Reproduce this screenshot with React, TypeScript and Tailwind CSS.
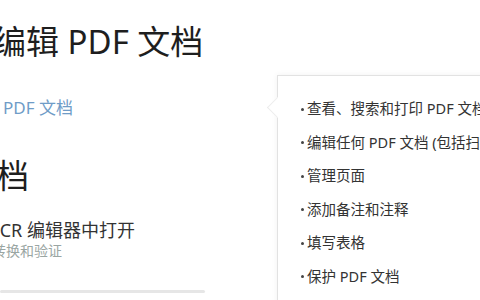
import React from "react";

const font = { fontFamily: '"Noto Sans", "Noto Sans CJK SC", sans-serif' };

export default function App() {
  const items = [
    "查看、搜索和打印 PDF 文档",
    "编辑任何 PDF 文档 (包括扫描的文档)",
    "管理页面",
    "添加备注和注释",
    "填写表格",
    "保护 PDF 文档",
    "转换 PDF 文档",
  ];
  return (
    <div
      className="relative w-[480px] h-[300px] overflow-hidden bg-white"
      style={font}
    >
      <div className="flex flex-col">
        <div className="mt-[20px] -ml-[7px] h-[44px] text-[33px] leading-[44px] text-[#1e1e1e] whitespace-nowrap">
          编辑 PDF 文档
        </div>
        <div className="mt-[32px] ml-[3px] h-[24px] text-[17px] leading-[24px] text-[#6f9cc7] whitespace-nowrap">
          PDF 文档
        </div>
        <div className="mt-[34px] -ml-[37px] h-[44px] text-[33px] leading-[44px] text-[#1e1e1e] whitespace-nowrap">
          文档
        </div>
        <div className="mt-[20px] -ml-[37px] h-[24px] text-[18px] leading-[24px] text-[#333] whitespace-nowrap">
          在 OCR 编辑器中打开
        </div>
        <div className="-ml-[8px] h-[18px] text-[14px] leading-[18px] text-[#9aa6a3] whitespace-nowrap">
          转换和验证
        </div>
        <div className="mt-[30px] h-[3px] w-[205px] rounded-full bg-[#e6e6e6]" />
      </div>

      <div className="absolute left-[277px] top-[75px] w-[260px] h-[260px] bg-white border border-[#e2e2e2] shadow-[0_0_6px_rgba(0,0,0,0.06)]">
        <div className="absolute -left-[8px] top-[24px] w-[15px] h-[15px] rotate-45 bg-white border-l border-b border-[#ececec]" />
        <ul className="relative pt-[21px] pl-[23px] flex flex-col gap-[11.5px]">
          {items.map((t) => (
            <li
              key={t}
              className="flex items-center h-[22px] text-[14.5px] leading-[22px] text-[#333] whitespace-nowrap"
            >
              <span className="mt-[2px] mr-[3px] w-[3px] h-[3px] shrink-0 rounded-full bg-[#444]" />
              <span>{t}</span>
            </li>
          ))}
        </ul>
      </div>
    </div>
  );
}
